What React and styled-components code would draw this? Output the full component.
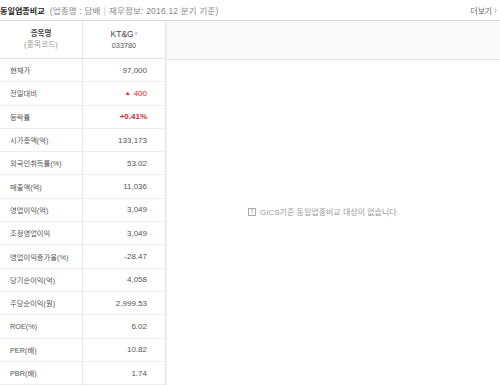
import styled, { createGlobalStyle } from 'styled-components';

const GlobalStyle = createGlobalStyle`
    body {
        margin: 0;
        background: #fff;
        font-family: "Liberation Sans", "Noto Sans CJK KR", sans-serif;
        font-size: 7.3px;
        color: #333;
    }
`;

const Wrap = styled.div`
    width: 500px;
    height: 385px;
    overflow: hidden;
`;

const TitleBar = styled.div`
    height: 20px;
    display: flex;
    align-items: center;
    justify-content: space-between;
`;

const Title = styled.div`
    display: flex;
    align-items: center;
    gap: 5px;
`;

const TitleText = styled.strong`
    font-size: 8.1px;
    font-weight: 700;
    color: #222;
`;

const SubText = styled.span`
    font-size: 8.5px;
    letter-spacing: 0.2px;
    color: #888;
`;

const Bar = styled.span`
    color: #ccc;
    margin: 0 3px;
`;

const More = styled.span`
    font-size: 7.8px;
    color: #666;
    padding-right: 3px;
    display: flex;
    align-items: center;
    gap: 2px;
`;

const Body = styled.div`
    display: flex;
    border-top: 1px solid #d8d8d8;
    height: 365px;
`;

const Table = styled.div`
    width: 165px;
    flex-shrink: 0;
    display: grid;
    grid-template-columns: 83px 82px;
    grid-auto-rows: 23.3px;
    grid-template-rows: 38px;
    border-right: 1px solid #e6e6e6;
`;

const HeadCell = styled.div`
    display: flex;
    flex-direction: column;
    align-items: center;
    justify-content: center;
    gap: 3px;
    border-bottom: 1px solid #e3e3e3;
    border-right: ${p => (p.$first ? '1px solid #e6e6e6' : 'none')};
    line-height: 1;
`;

const HeadName = styled.span`
    font-size: ${p => (p.$latin ? '8.5px' : '7.5px')};
    font-weight: ${p => (p.$latin ? 400 : 700)};
    color: ${p => (p.$latin ? '#444' : '#444')};
`;

const Code = styled.span`
    color: ${p => (p.$muted ? '#999' : '#555')};
    font-size: ${p => (p.$muted ? '7.8px' : '7.3px')};
`;

const Star = styled.span`
    color: #e0708a;
    font-size: 7px;
    margin-left: 1px;
`;

const Label = styled.div`
    display: flex;
    align-items: center;
    padding-left: 10px;
    border-bottom: 1px solid #ececec;
    border-right: 1px solid #e6e6e6;
    color: #555;
    box-sizing: border-box;
`;

const Value = styled.div`
    display: flex;
    align-items: center;
    justify-content: flex-end;
    padding-right: 18px;
    border-bottom: 1px solid #ececec;
    font-size: 8px;
    color: ${p => (p.$red ? '#d9262b' : '#555')};
    font-weight: ${p => (p.$bold ? 700 : 400)};
    box-sizing: border-box;
`;

const Arrow = styled.span`
    font-size: 6px;
    margin-right: 3px;
`;

const Panel = styled.div`
    flex: 1;
    display: flex;
    flex-direction: column;
    border-left: 1px solid #f0f0f0;
`;

const PanelHead = styled.div`
    height: 38px;
    background: #f9f9f9;
    border-bottom: 1px solid #e3e3e3;
`;

const Empty = styled.div`
    display: flex;
    justify-content: center;
    align-items: center;
    gap: 4px;
    padding-top: 146px;
    padding-right: 20px;
    color: #999;
    font-size: 8px;
`;

const InfoBox = styled.span`
    width: 8px;
    height: 8px;
    border: 1px solid #aaa;
    box-sizing: border-box;
    display: flex;
    align-items: center;
    justify-content: center;
    font-size: 5.5px;
    font-weight: 700;
    color: #888;
    line-height: 1;
`;

const rows = [
    { label: '현재가', value: '97,000' },
    { label: '전일대비', value: '400', red: true, up: true },
    { label: '등락률', value: '+0.41%', red: true, bold: true },
    { label: '시가총액(억)', value: '133,173' },
    { label: '외국인취득률(%)', value: '53.02' },
    { label: '매출액(억)', value: '11,036' },
    { label: '영업이익(억)', value: '3,049' },
    { label: '조정영업이익', value: '3,049' },
    { label: '영업이익증가율(%)', value: '-28.47' },
    { label: '당기순이익(억)', value: '4,058' },
    { label: '주당순이익(원)', value: '2,999.53' },
    { label: 'ROE(%)', value: '6.02' },
    { label: 'PER(배)', value: '10.82' },
    { label: 'PBR(배)', value: '1.74' },
];

export default function App() {
    return (
        <Wrap>
            <GlobalStyle />
            <TitleBar>
                <Title>
                    <TitleText>동일업종비교</TitleText>
                    <SubText>
                        (업종명 : 담배<Bar>|</Bar>재무정보: 2016.12 분기 기준)
                    </SubText>
                </Title>
                <More>
                    더보기
                    <svg width="3" height="5" viewBox="0 0 3 5">
                        <path d="M0.5 0.5 L2.5 2.5 L0.5 4.5" fill="none" stroke="#999" strokeWidth="0.8" />
                    </svg>
                </More>
            </TitleBar>
            <Body>
                <Table>
                    <HeadCell $first>
                        <HeadName>종목명</HeadName>
                        <Code $muted>(종목코드)</Code>
                    </HeadCell>
                    <HeadCell>
                        <HeadName $latin>KT&G<Star>*</Star></HeadName>
                        <Code>033780</Code>
                    </HeadCell>
                    {rows.map(r => [
                        <Label key={r.label + 'l'}>{r.label}</Label>,
                        <Value key={r.label + 'v'} $red={r.red} $bold={r.bold}>
                            {r.up && <Arrow>▲</Arrow>}
                            {r.value}
                        </Value>,
                    ])}
                </Table>
                <Panel>
                    <PanelHead />
                    <Empty>
                        <InfoBox>!</InfoBox>
                        GICS기준 동일업종비교 대상이 없습니다.
                    </Empty>
                </Panel>
            </Body>
        </Wrap>
    );
}
